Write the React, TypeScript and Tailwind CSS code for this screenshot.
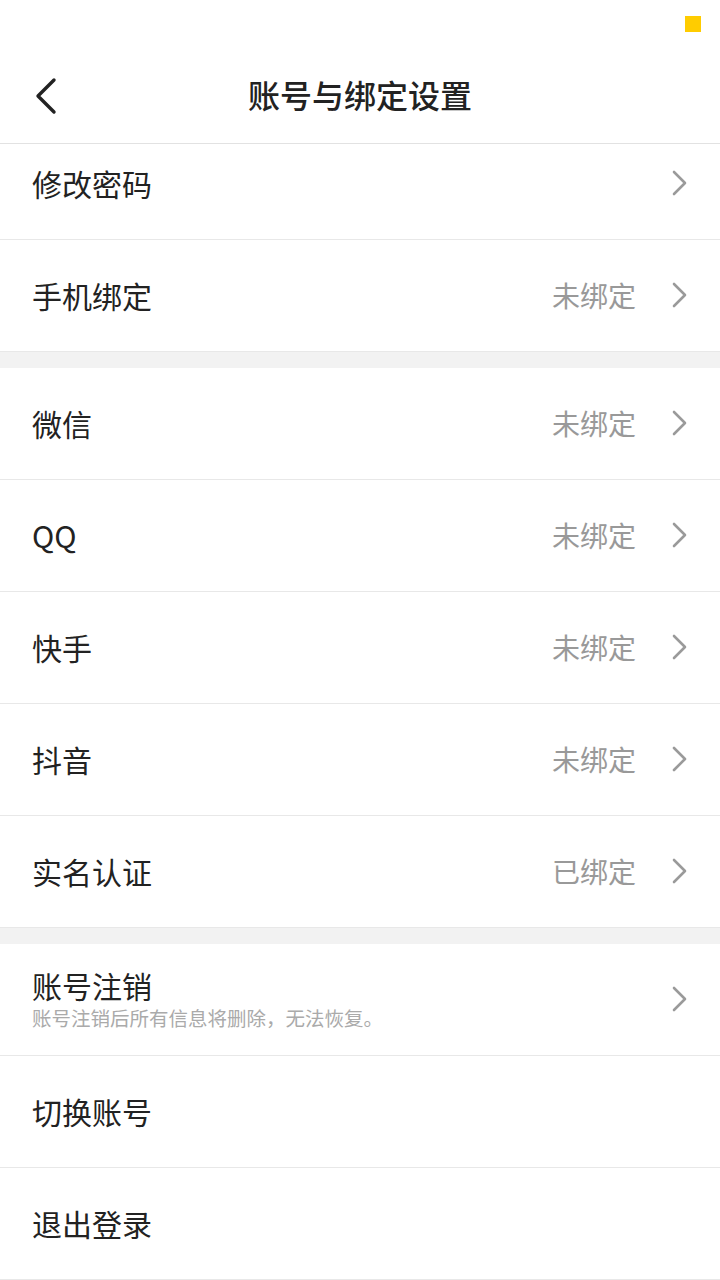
type Row = { label: string; value?: string; sub?: string; arrow?: boolean; first?: boolean }

const groups: Row[][] = [
  [
    { label: "修改密码", arrow: true, first: true },
    { label: "手机绑定", value: "未绑定", arrow: true },
  ],
  [
    { label: "微信", value: "未绑定", arrow: true },
    { label: "QQ", value: "未绑定", arrow: true },
    { label: "快手", value: "未绑定", arrow: true },
    { label: "抖音", value: "未绑定", arrow: true },
    { label: "实名认证", value: "已绑定", arrow: true },
  ],
  [
    { label: "账号注销", sub: "账号注销后所有信息将删除，无法恢复。", arrow: true },
    { label: "切换账号" },
    { label: "退出登录" },
  ],
]

function Chevron() {
  return (
    <svg width="17" height="26" viewBox="0 0 17 26" fill="none" className="shrink-0">
      <polyline points="3,2 14,13 3,24" stroke="#9a9a9a" strokeWidth="2.6" strokeLinecap="round" strokeLinejoin="round" />
    </svg>
  )
}

function SettingRow({ row }: { row: Row }) {
  return (
    <div
      className={`flex items-center bg-white border-b border-[#e8e8e8] pl-[32px] pr-[32px] ${
        row.first ? "h-[96px] pb-[17px]" : "h-[112px] pb-[2px]"
      }`}
    >
      <div className="flex-1 flex flex-col">
        <span className="text-[30px] leading-[38px] text-[#222]">{row.label}</span>
        {row.sub && <span className="text-[19.5px] leading-[26px] text-[#aaa] mt-[1px]">{row.sub}</span>}
      </div>
      {row.value && <span className="text-[28px] text-[#999] mr-[35px]">{row.value}</span>}
      {row.arrow && <Chevron />}
    </div>
  )
}

export default function App() {
  return (
    <div
      className="w-[720px] h-[1280px] overflow-hidden bg-white"
      style={{ fontFamily: '"Noto Sans CJK SC", "Noto Sans", sans-serif' }}
    >
      <div className="h-[48px] flex justify-end items-start pt-[16px] pr-[19px]">
        <div className="w-[16px] h-[16px] bg-[#ffcc00]" />
      </div>
      <div className="h-[96px] relative flex items-center justify-center border-b border-[#e2e2e2] pb-[4px]">
        <svg width="24" height="38" viewBox="0 0 24 38" fill="none" className="absolute left-[34px] top-[29px]">
          <polyline points="20,3 4,19 20,35" stroke="#222" strokeWidth="3.4" strokeLinecap="round" strokeLinejoin="round" />
        </svg>
        <span className="text-[32px] font-medium text-[#222]">账号与绑定设置</span>
      </div>
      {groups.map((g, i) => (
        <div key={i} className={i > 0 ? "border-t-[16px] border-[#f2f2f2]" : ""}>
          {g.map((r) => (
            <SettingRow key={r.label} row={r} />
          ))}
        </div>
      ))}
    </div>
  )
}
